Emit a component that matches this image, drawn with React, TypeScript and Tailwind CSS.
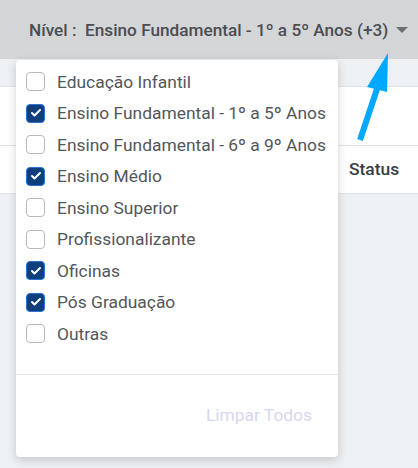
import { Check } from 'lucide-react';

const levels = [
  { label: 'Educação Infantil', checked: false },
  { label: 'Ensino Fundamental - 1º a 5º Anos', checked: true },
  { label: 'Ensino Fundamental - 6º a 9º Anos', checked: false },
  { label: 'Ensino Médio', checked: true },
  { label: 'Ensino Superior', checked: false },
  { label: 'Profissionalizante', checked: false },
  { label: 'Oficinas', checked: true },
  { label: 'Pós Graduação', checked: true },
  { label: 'Outras', checked: false },
];

function Box({ checked }: { checked: boolean }) {
  if (checked) {
    return (
      <span className="flex h-[19px] w-[19px] shrink-0 items-center justify-center rounded-[4px] border border-[#2a74d4] bg-[#0f3f7c]">
        <Check size={12} strokeWidth={4} className="text-white" />
      </span>
    );
  }
  return <span className="h-[19px] w-[19px] shrink-0 rounded-[4px] border border-[#b5b9bf] bg-white" />;
}

export default function App() {
  return (
    <div className="relative h-[468px] w-[418px] overflow-hidden bg-[#eef1f4] font-['Roboto',sans-serif]">
      <header className="flex h-[59px] items-center bg-[#d4d5d7] pl-[29px] pt-[2px]">
        <span className="whitespace-nowrap text-[17.2px] font-medium text-[#4a4d52]">Nível :&nbsp; Ensino Fundamental - 1º a 5º Anos (+3)</span>
        <svg width="12" height="7" viewBox="0 0 12 7" className="ml-[8px] shrink-0">
          <path d="M0 0 L12 0 L6 6 Z" fill="#6b6e73" />
        </svg>
      </header>

      <div className="mt-[27px] border-y border-[#dfe2e6] bg-white">
        <div className="h-[58px]" />
        <div className="flex h-[48px] items-center border-t border-[#dfe2e6] pl-[349px] text-[17.4px] font-medium text-[#3a3d42]">Status</div>
      </div>

      <div className="absolute left-[16px] top-[60px] w-[322px] rounded-[4px] bg-white shadow-[0_3px_10px_rgba(0,0,0,0.18)]">
        <ul className="flex flex-col pt-[6px] pb-[24px]">
          {levels.map((level) => (
            <li key={level.label} className="flex h-[31.5px] items-center gap-[12px] pl-[10px]">
              <Box checked={level.checked} />
              <span className="whitespace-nowrap text-[17.4px] text-[#53565b]">{level.label}</span>
            </li>
          ))}
        </ul>
        <div className="flex h-[83px] items-center justify-end border-t border-[#e6e8ea] pr-[26px]">
          <span className="text-[17.4px] text-[#d6d7ee]">Limpar Todos</span>
        </div>
      </div>

      <svg className="absolute left-0 top-0" width="418" height="468" viewBox="0 0 418 468">
        <line x1="360" y1="140" x2="378" y2="86" stroke="#00a8ff" strokeWidth="6" />
        <path d="M388 53 L367 87 L387 92 Z" fill="#00a8ff" />
      </svg>
    </div>
  );
}
